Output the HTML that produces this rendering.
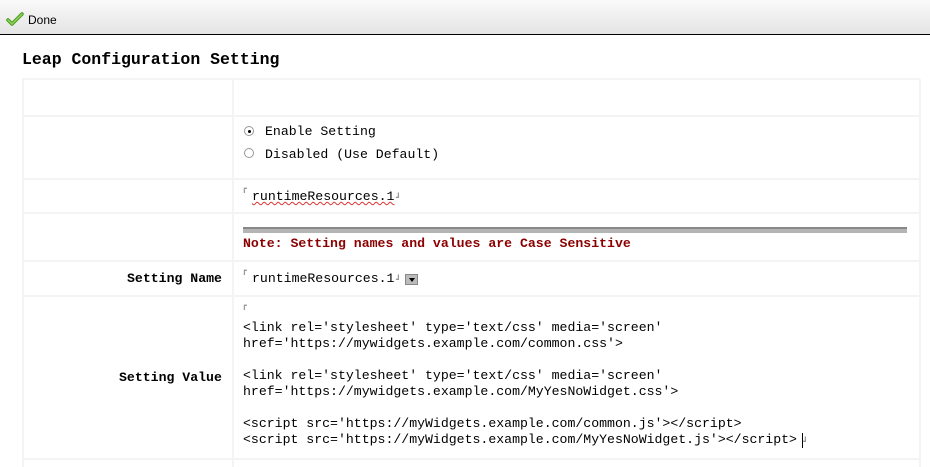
<!DOCTYPE html>
<html><head><style>
*{margin:0;padding:0;box-sizing:border-box}
body{width:930px;height:467px;background:#fff;position:relative;overflow:hidden;font-family:"Liberation Mono",monospace;font-size:13.2px;color:#000}
.top{position:absolute;left:0;top:0;width:930px;height:35px;background:linear-gradient(#fafafa,#e4e4e4);border-bottom:1px solid #000}
.done{position:absolute;left:28px;top:13px;font-family:"Liberation Sans",sans-serif;font-size:12px}
.a{position:absolute;white-space:pre;line-height:16px}
.hl{position:absolute;left:22px;width:898px;height:2px;background:#f4f4f4}
.vl{position:absolute;width:2px;background:#f4f4f4;top:79px;height:388px}
.b{font-weight:bold}
.rad{position:absolute;width:10px;height:10px;border:1px solid #999;border-radius:50%;background:#fff}
.mk{position:absolute;font-size:8px;color:#999}
</style></head><body>
<div class="top"><svg style="position:absolute;left:6px;top:12px" width="18" height="15" viewBox="0 0 18 15"><path d="M2 8 L6 12 L16 2" stroke="#4a9a1a" stroke-width="3.5" fill="none" stroke-linecap="round" stroke-linejoin="round"/><path d="M2 8 L6 12 L16 2" stroke="#8fd860" stroke-width="1.5" fill="none" stroke-linecap="round" stroke-linejoin="round"/></svg><div class="done">Done</div></div>
<div class="a b" style="left:22px;top:51px;font-size:16.5px;line-height:18px">Leap Configuration Setting</div>
<div class="hl" style="top:78px"></div>
<div class="hl" style="top:115px"></div>
<div class="hl" style="top:178px"></div>
<div class="hl" style="top:212px"></div>
<div class="hl" style="top:260px"></div>
<div class="hl" style="top:295px"></div>
<div class="hl" style="top:458px"></div>
<div class="vl" style="left:22px"></div>
<div class="vl" style="left:232px"></div>
<div class="vl" style="left:919px"></div>
<div class="rad" style="left:244px;top:126px"><div style="position:absolute;left:3px;top:3px;width:3px;height:3px;background:#000;border-radius:50%"></div></div>
<div class="a" style="left:265px;top:124px">Enable Setting</div>
<div class="rad" style="left:244px;top:148px"></div>
<div class="a" style="left:265px;top:147px">Disabled (Use Default)</div>
<div class="mk" style="left:242px;top:184px">&#x250F;</div>
<div class="a" style="left:252px;top:189px;text-decoration:underline wavy #d33;text-decoration-thickness:1px">runtimeResources.1</div>
<div class="mk" style="left:396px;top:193px">&#x251B;</div>
<div style="position:absolute;left:243px;top:227px;width:664px;height:6px;background:#b4b4b4;border-top:2px solid #888"></div>
<div class="a b" style="left:243px;top:236px;color:#8b0000">Note: Setting names and values are Case Sensitive</div>
<div class="a b" style="left:127px;top:271px">Setting Name</div>
<div class="mk" style="left:242px;top:266px">&#x250F;</div>
<div class="a" style="left:252px;top:271px">runtimeResources.1</div>
<div class="mk" style="left:396px;top:275px">&#x251B;</div>
<div style="position:absolute;left:405px;top:274px;width:13px;height:11px;background:#bbb;border:1px solid #888"><div style="position:absolute;left:3px;top:3px;border-left:3px solid transparent;border-right:3px solid transparent;border-top:4px solid #000"></div></div>
<div class="a b" style="left:119px;top:370px">Setting Value</div>
<div class="mk" style="left:242px;top:301px">&#x250F;</div>
<div class="a" style="left:243px;top:320px">&lt;link rel='stylesheet' type='text/css' media='screen'
href='https://mywidgets.example.com/common.css'&gt;

&lt;link rel='stylesheet' type='text/css' media='screen'
href='https://mywidgets.example.com/MyYesNoWidget.css'&gt;

&lt;script src='https://myWidgets.example.com/common.js'&gt;&lt;/script&gt;
&lt;script src='https://myWidgets.example.com/MyYesNoWidget.js'&gt;&lt;/script&gt;</div>
<div style="position:absolute;left:802px;top:433px;width:1px;height:15px;background:#000"></div>
<div class="mk" style="left:803px;top:437px">&#x251B;</div>
</body></html>
